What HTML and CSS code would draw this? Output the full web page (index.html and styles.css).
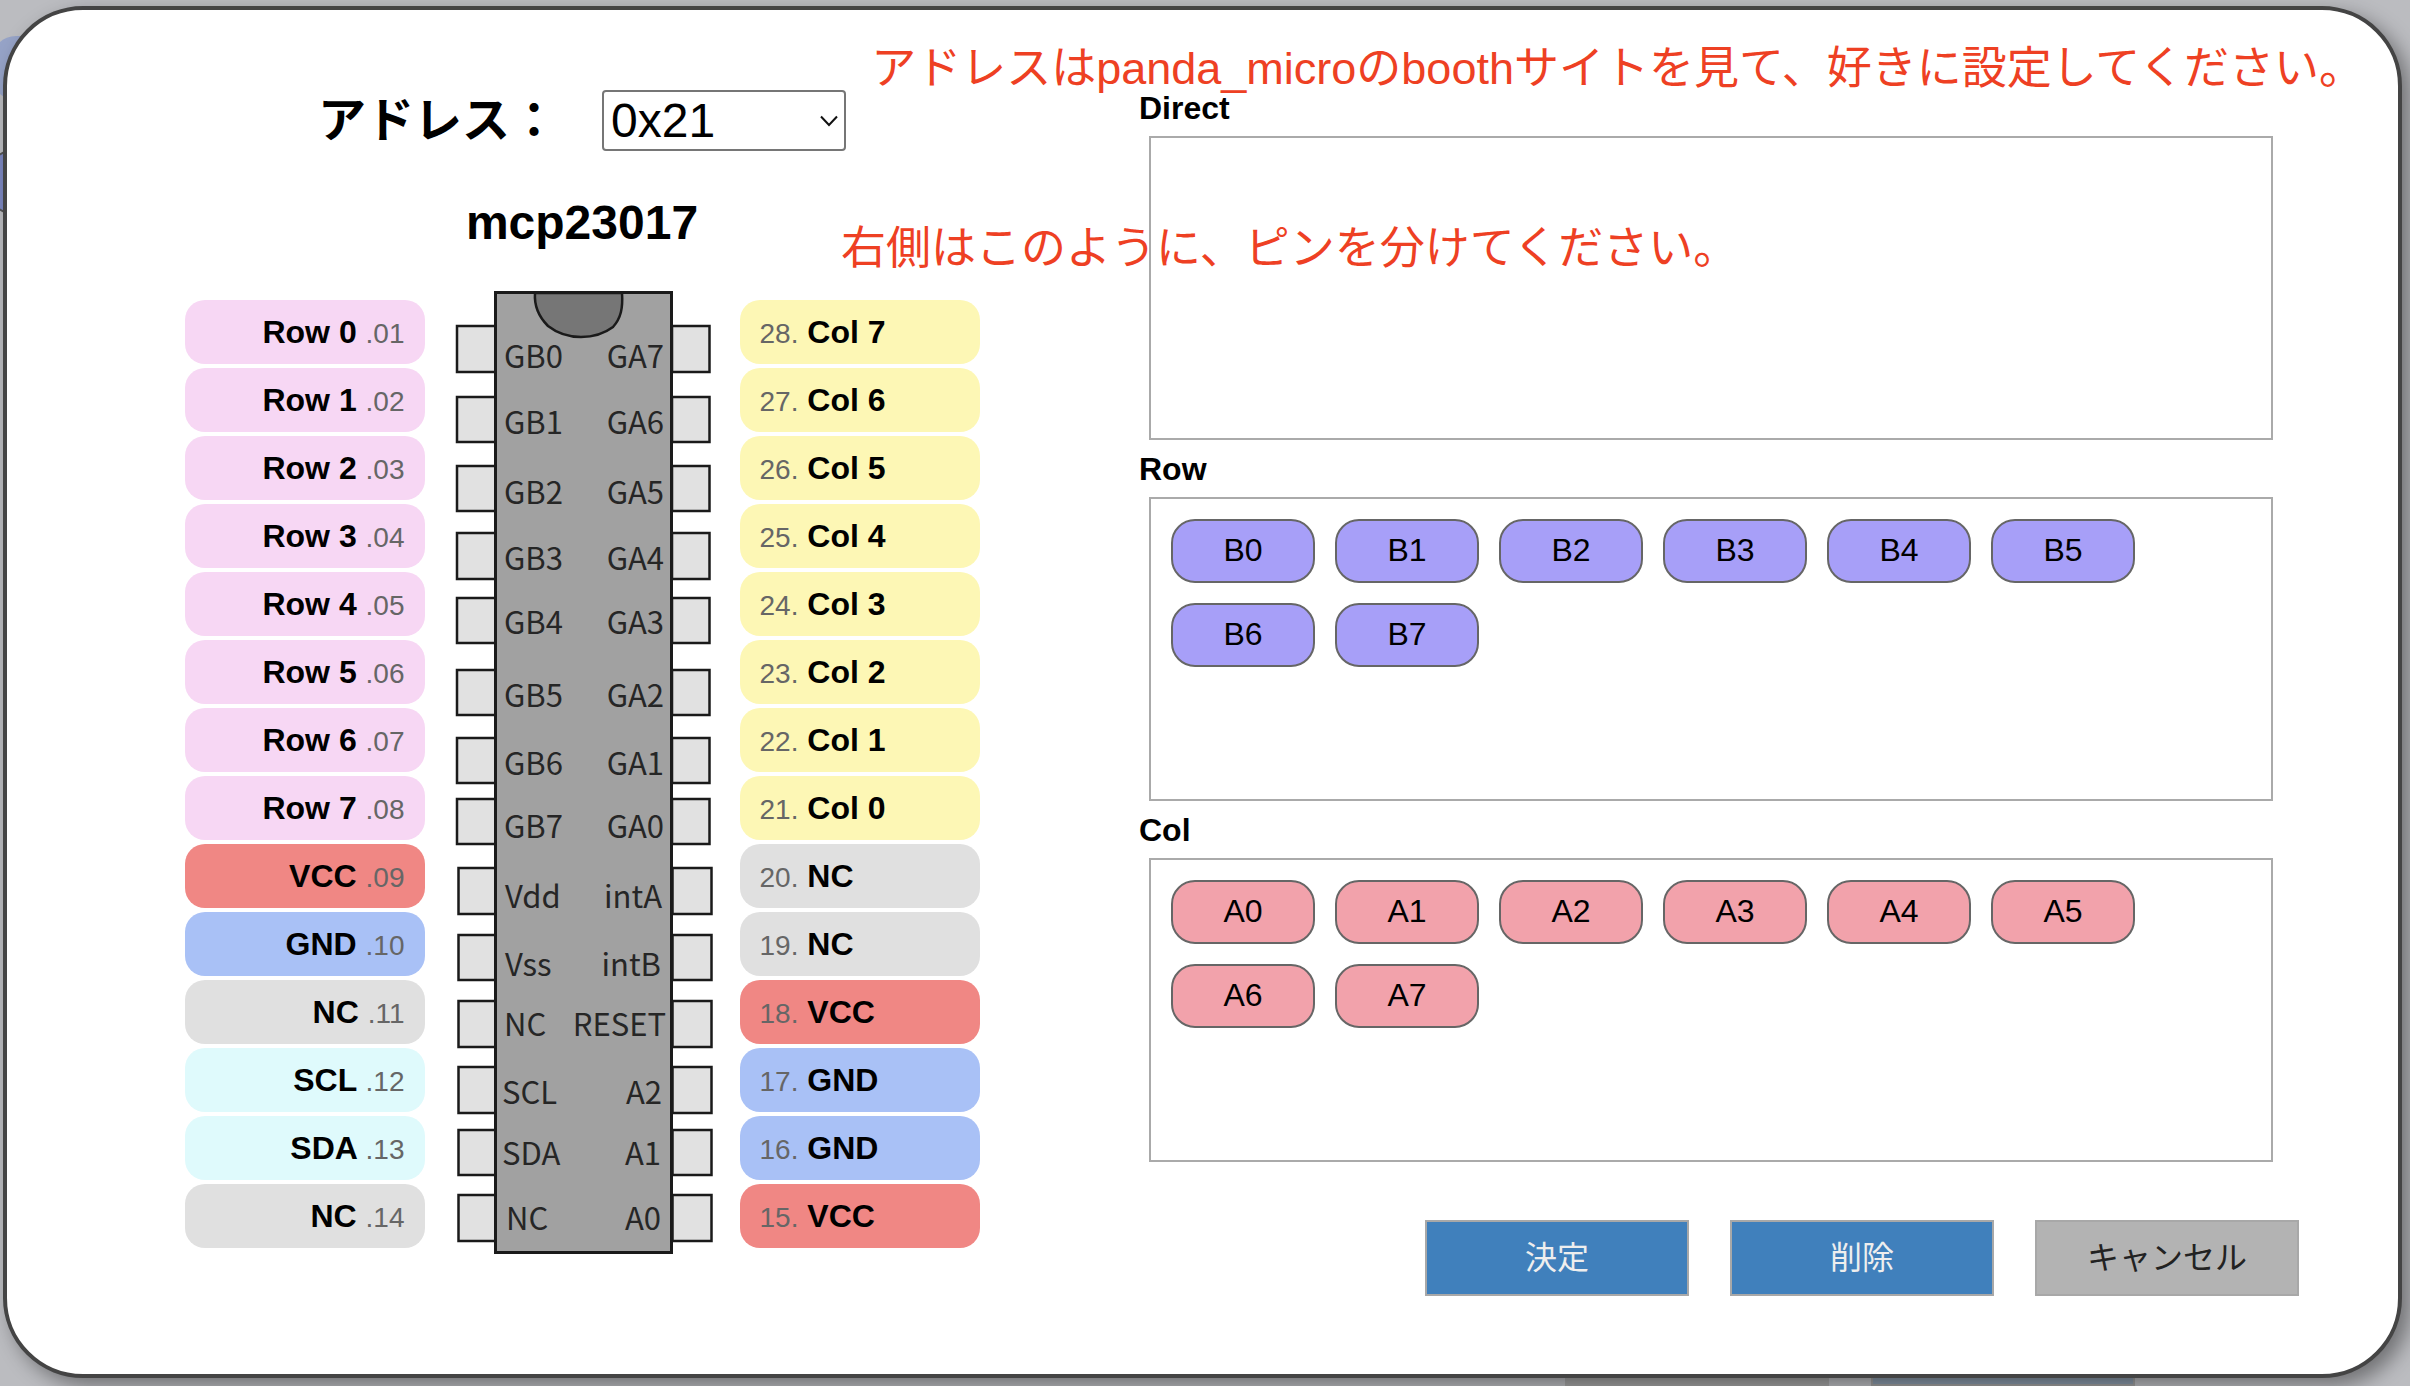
FILE: index.html
```html
<!DOCTYPE html>
<html lang="ja">
<head>
<meta charset="utf-8">
<meta name="viewport" content="width=device-width, initial-scale=1">
<title>mcp23017</title>
<link rel="stylesheet" href="styles.css">
</head>
<body>
<div class="backdrop" aria-hidden="true">
  <span class="under under-pill"></span>
  <span class="under under-key"></span>
  <span class="under under-gray"></span>
  <span class="under under-blue"></span>
</div>
<main class="dialog">
  <section class="device">
    <div class="address">
      <label class="address-label" for="address">アドレス：</label>
      <div class="select-wrap">
        <select class="address-select" id="address">
          <option>0x20</option>
          <option selected>0x21</option>
          <option>0x22</option>
          <option>0x23</option>
        </select>
        <svg class="chevron" viewBox="0 0 18 12" aria-hidden="true"><path d="M1 1.500 9 10 17 1.500"/></svg>
      </div>
    </div>
    <h1 class="device-name">mcp23017</h1>
    <div class="pinout">
      <ul class="pins pins-left">
        <li class="pin row">Row 0 <span class="no">.01</span></li>
        <li class="pin row">Row 1 <span class="no">.02</span></li>
        <li class="pin row">Row 2 <span class="no">.03</span></li>
        <li class="pin row">Row 3 <span class="no">.04</span></li>
        <li class="pin row">Row 4 <span class="no">.05</span></li>
        <li class="pin row">Row 5 <span class="no">.06</span></li>
        <li class="pin row">Row 6 <span class="no">.07</span></li>
        <li class="pin row">Row 7 <span class="no">.08</span></li>
        <li class="pin vcc">VCC <span class="no">.09</span></li>
        <li class="pin gnd">GND <span class="no">.10</span></li>
        <li class="pin nc">NC <span class="no">.11</span></li>
        <li class="pin i2c">SCL <span class="no">.12</span></li>
        <li class="pin i2c">SDA <span class="no">.13</span></li>
        <li class="pin nc">NC <span class="no">.14</span></li>
      </ul>
      <svg class="ic" viewBox="425 290 315 964" role="img" aria-label="mcp23017">
        <g class="leg">
          <path d="M457 326h39v46h-39zM457 397h39v45h-39zM457 466h39v45h-39zM457 533h39v46h-39zM457 598h39v45h-39zM457 670h39v45h-39zM457 738h39v45h-39zM457 799h39v45h-39zM458.500 868h38v46h-38zM458.500 935h38v45h-38zM458.500 1001h38v46h-38zM458.500 1067h38v46h-38zM458.500 1130h38v45h-38zM458.500 1195h38v46h-38z"/>
          <path d="M672 326h37.500v46H672zM672 397h37.500v45H672zM672 466h37.500v45H672zM672 533h37.500v46H672zM672 598h37.500v45H672zM672 670h37.500v45H672zM672 738h37.500v45H672zM672 799h37.500v45H672zM672.500 868h39v46h-39zM672.500 935h39v45h-39zM672.500 1001h39v46h-39zM672.500 1067h39v46h-39zM672.500 1130h39v45h-39zM672.500 1195h39v46h-39z"/>
        </g>
        <rect class="body" x="495.500" y="292.500" width="176" height="960"/>
        <path class="notch" d="M535 293c-1 14 4 24 13 33 9 7 20 11 33 11 12 0 24-4 32-10 8-9 10-19 9-34z"/>
        <g class="ic-text">
          <text x="504" y="368">GB0</text><text x="504" y="434">GB1</text>
          <text x="504" y="504">GB2</text><text x="504" y="570">GB3</text>
          <text x="504" y="634">GB4</text><text x="504" y="707">GB5</text>
          <text x="504" y="775">GB6</text><text x="504" y="838">GB7</text>
          <text x="505" y="908">Vdd</text><text x="505" y="976">Vss</text>
          <text x="504" y="1036">NC</text><text x="502" y="1104">SCL</text>
          <text x="502" y="1165">SDA</text><text x="506" y="1230">NC</text>
        </g>
        <g class="ic-text ic-text-end">
          <text x="664" y="368">GA7</text><text x="664" y="434">GA6</text>
          <text x="664" y="504">GA5</text><text x="664" y="570">GA4</text>
          <text x="664" y="634">GA3</text><text x="664" y="707">GA2</text>
          <text x="664" y="775">GA1</text><text x="664" y="838">GA0</text>
          <text x="662" y="908">intA</text><text x="661" y="976">intB</text>
          <text x="666" y="1036">RESET</text><text x="662" y="1104">A2</text>
          <text x="661" y="1165">A1</text><text x="661" y="1230">A0</text>
        </g>
      </svg>
      <ul class="pins">
        <li class="pin col"><span class="no">28.</span> Col 7</li>
        <li class="pin col"><span class="no">27.</span> Col 6</li>
        <li class="pin col"><span class="no">26.</span> Col 5</li>
        <li class="pin col"><span class="no">25.</span> Col 4</li>
        <li class="pin col"><span class="no">24.</span> Col 3</li>
        <li class="pin col"><span class="no">23.</span> Col 2</li>
        <li class="pin col"><span class="no">22.</span> Col 1</li>
        <li class="pin col"><span class="no">21.</span> Col 0</li>
        <li class="pin nc"><span class="no">20.</span> NC</li>
        <li class="pin nc"><span class="no">19.</span> NC</li>
        <li class="pin vcc"><span class="no">18.</span> VCC</li>
        <li class="pin gnd"><span class="no">17.</span> GND</li>
        <li class="pin gnd"><span class="no">16.</span> GND</li>
        <li class="pin vcc"><span class="no">15.</span> VCC</li>
      </ul>
    </div>
  </section>
  <section class="assign">
    <div class="group">
      <h2 class="group-name">Direct</h2>
      <div class="drop"></div>
    </div>
    <div class="group">
      <h2 class="group-name">Row</h2>
      <div class="drop">
        <div class="tag tag-b">B0</div><div class="tag tag-b">B1</div>
        <div class="tag tag-b">B2</div><div class="tag tag-b">B3</div>
        <div class="tag tag-b">B4</div><div class="tag tag-b">B5</div>
        <div class="tag tag-b">B6</div><div class="tag tag-b">B7</div>
      </div>
    </div>
    <div class="group">
      <h2 class="group-name">Col</h2>
      <div class="drop">
        <div class="tag tag-a">A0</div><div class="tag tag-a">A1</div>
        <div class="tag tag-a">A2</div><div class="tag tag-a">A3</div>
        <div class="tag tag-a">A4</div><div class="tag tag-a">A5</div>
        <div class="tag tag-a">A6</div><div class="tag tag-a">A7</div>
      </div>
    </div>
    <div class="actions">
      <button class="btn" type="button">決定</button>
      <button class="btn" type="button">削除</button>
      <button class="btn btn-cancel" type="button">キャンセル</button>
    </div>
  </section>
  <p class="note note-address">アドレスはpanda_microのboothサイトを見て、好きに設定してください。</p>
  <p class="note note-pins">右側はこのように、ピンを分けてください。</p>
</main>
</body>
</html>
```
FILE: styles.css
```css
* {
  box-sizing: border-box;
}

body {
  margin: 0;
  min-height: 100vh;
  padding: 6px 8px 8px 3px;
  background: #bbbcc0;
  color: #000;
  font-family: "Liberation Sans", "Noto Sans CJK JP", sans-serif;
  font-size: 32px;
  line-height: 36px;
}

/* Parts of the page that show round the dialog's edge */
.backdrop {
  position: absolute;
  inset: 0;
  overflow: hidden;
}

.under {
  position: absolute;
}

.under-pill {
  left: -8px;
  top: 36px;
  width: 120px;
  height: 64px;
  border-radius: 24px;
  background: #96a3c7;
}

.under-key {
  left: -12px;
  top: 150px;
  width: 144px;
  height: 64px;
  border: 2px solid #555;
  border-radius: 24px;
  background: #7c87c0;
}

.under-gray,
.under-blue {
  bottom: 0;
  width: 264px;
  height: 40px;
}

.under-gray {
  right: 581px;
  background: #a5a5a5;
}

.under-blue {
  right: 275px;
  border: 2px solid #a0a0a0;
  background: #8b9bac;
}

.dialog {
  position: relative;
  display: grid;
  grid-template-columns: 1132fr 1259fr;
  min-height: calc(100vh - 14px);
  padding: 80px 0 74px;
  border: 4px solid #444;
  border-radius: 80px;
  background: #fff;
  box-shadow: 8px 8px 20px rgba(0, 0, 0, 0.4);
}

.device {
  display: flex;
  flex-direction: column;
  align-items: center;
  padding-left: 18px;
}

.address {
  display: flex;
  align-items: center;
  gap: 44px;
}

.address-label {
  font-size: 48px;
  font-weight: 700;
  line-height: 60px;
}

.select-wrap {
  position: relative;
}

.address-select {
  display: block;
  width: 244px;
  height: 61px;
  padding: 0 7px;
  border: 2px solid #767676;
  border-radius: 4px;
  background: #fff;
  color: #000;
  font: inherit;
  font-size: 48px;
  line-height: 56px;
  appearance: none;
}

.chevron {
  position: absolute;
  right: 8px;
  top: 25px;
  width: 18px;
  height: 12px;
  fill: none;
  stroke: #111;
  stroke-width: 2;
  pointer-events: none;
}

.device-name {
  margin: 44px 0 39px;
  font-size: 48px;
  line-height: 56px;
}

.pinout {
  display: flex;
  align-items: flex-start;
}

.pins {
  display: flex;
  flex-direction: column;
  gap: 4px;
  width: 240px;
  margin: 10px 0 0;
  padding: 0;
  list-style: none;
}

.pin {
  padding: 14px 20px;
  border-radius: 20px;
  font-weight: 700;
}

.pins-left {
  text-align: right;
}

.no {
  color: #666;
  font-size: 28px;
  font-weight: 400;
  line-height: 28px;
}

.row { background: #f7d7f4; }
.col { background: #fdf7b5; }
.vcc { background: #f08784; }
.gnd { background: #a9c1f6; }
.nc { background: #e0e0e0; }
.i2c { background: #dffafc; }

.ic {
  width: 315px;
  height: 964px;
}

.leg {
  fill: #e1e1e1;
  stroke: #1a1a1a;
  stroke-width: 2.5;
}

.body {
  fill: #a1a1a1;
  stroke: #1a1a1a;
  stroke-width: 3;
}

.notch {
  fill: #767676;
  stroke: #1a1a1a;
  stroke-width: 2.5;
}

.ic-text {
  fill: #262626;
  font-family: "Noto Sans CJK JP", sans-serif;
  font-size: 31px;
}

.ic-text-end {
  text-anchor: end;
}

.assign {
  display: flex;
  flex-direction: column;
  gap: 11px;
}

.group-name {
  margin: 0 0 10px;
  font-size: 32px;
  line-height: 36px;
}

.drop {
  display: flex;
  flex-wrap: wrap;
  align-content: flex-start;
  gap: 20px;
  min-height: 304px;
  margin: 0 125px 0 10px;
  padding: 20px;
  border: 2px solid #aaa;
}

.tag {
  width: 144px;
  padding: 11px 0 13px;
  border: 2px solid #666;
  border-radius: 24px;
  text-align: center;
}

.tag-b { background: #a79ff8; }
.tag-a { background: #f2a2ab; }

.actions {
  display: flex;
  justify-content: flex-end;
  gap: 41px;
  margin: 47px 99px 0 0;
}

.btn {
  width: 264px;
  height: 76px;
  padding: 0;
  border: 2px solid #a8a8a8;
  background: #4080bc;
  color: #eee;
  font: inherit;
}

.btn-cancel {
  background: #b3b3b3;
  color: #222;
}

/* Hand-placed remarks lying over the dialog */
.note {
  position: absolute;
  margin: 0;
  color: #ee4023;
  font-size: 45px;
  line-height: 60px;
  white-space: nowrap;
}

.note-address {
  right: 34px;
  top: 29px;
}

.note-pins {
  left: 834px;
  top: 209px;
}
```
